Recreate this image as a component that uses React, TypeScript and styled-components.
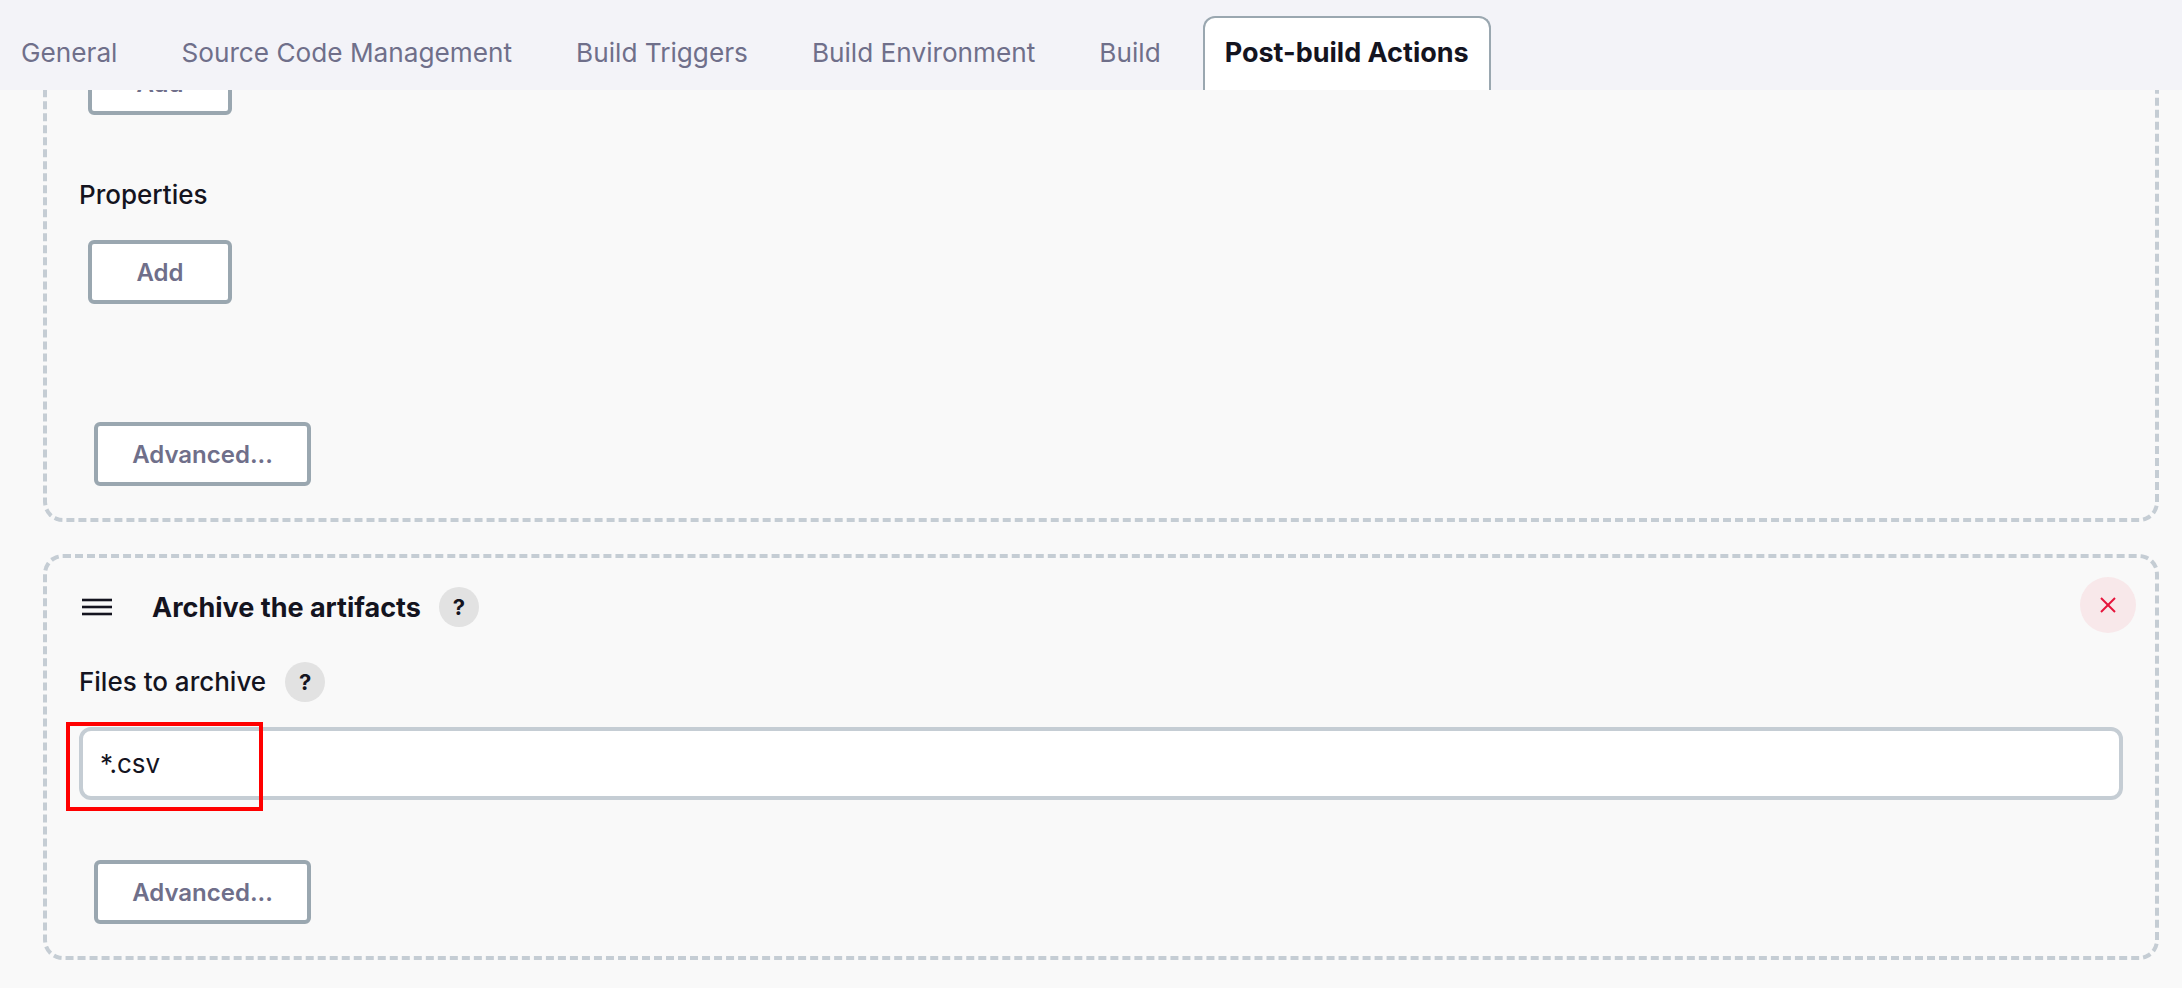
import { createGlobalStyle } from 'styled-components'
import styled from 'styled-components'

const GlobalStyle = createGlobalStyle`
  html, body {
    margin: 0;
    padding: 0;
    background: #f9f9f9;
    font-family: Inter, "Liberation Sans", sans-serif;
  }
`
const Page = styled.div`
  position: relative;
  display: flex;
  flex-direction: column;
  width: 2182px;
  height: 988px;
  overflow: hidden;
  background: #f9f9f9;
`
const TabBar = styled.div`
  display: flex;
  flex: 0 0 90px;
  align-items: flex-end;
  gap: 64px;
  padding-left: 21px;
  box-sizing: border-box;
  background: #f3f3f8;
  position: relative;
  z-index: 1;
`
const Tab = styled.div<{ $active?: boolean }>`
  box-sizing: border-box;
  height: ${p => (p.$active ? '74px' : '66px')};
  padding: ${p => (p.$active ? '19px 20px 0' : '13px 0 0')};
  margin-left: ${p => (p.$active ? '-22px' : '0')};
  font-size: ${p => (p.$active ? '27px' : '26.2px')};
  line-height: 32px;
  font-weight: ${p => (p.$active ? 700 : 400)};
  color: ${p => (p.$active ? '#14141f' : '#6f6f8a')};
  background: ${p => (p.$active ? '#fff' : 'transparent')};
  border: ${p => (p.$active ? '2px solid #9aa7b0' : 'none')};
  border-bottom: none;
  border-radius: ${p => (p.$active ? '12px 12px 0 0' : '0')};
  white-space: nowrap;
`
const Viewport = styled.div`
  flex: 1;
  overflow: hidden;
  padding: 0 23px 0 43px;
`
const Cards = styled.div`
  display: flex;
  flex-direction: column;
  gap: 32px;
  margin-top: -69px;
`
const Card = styled.div`
  position: relative;
  box-sizing: border-box;
  border: 4px dashed #c5cdd4;
  border-radius: 20px;
`
const TopCard = styled(Card)`
  height: 501px;
  padding: 26px 0 0 32px;
`
const BottomCard = styled(Card)`
  height: 406px;
  padding: 29px 0 0 32px;
`
const Button = styled.div<{ $wide?: boolean }>`
  display: flex;
  align-items: center;
  justify-content: center;
  box-sizing: border-box;
  width: ${p => (p.$wide ? '217px' : '144px')};
  height: 64px;
  margin-left: ${p => (p.$wide ? '15px' : '9px')};
  background: #fff;
  border: 4px solid #9aa7b0;
  border-radius: 6px;
  font-size: 24px;
  font-weight: 600;
  color: #6f6f8a;
`
const FieldLabel = styled.div`
  display: flex;
  align-items: center;
  gap: 19px;
  font-size: 26px;
  font-weight: 500;
  line-height: 40px;
  color: #14141f;
`
const PropertiesLabel = styled(FieldLabel)`
  margin: 60px 0 25px 0;
`
const TopAdvanced = styled.div`
  margin-top: 118px;
`
const Header = styled.div`
  display: flex;
  align-items: center;
  height: 40px;
`
const Grip = styled.svg`
  width: 30px;
  height: 18px;
  margin: 0 40px 0 3px;
  stroke: #14141f;
  stroke-width: 2.6;
`
const Title = styled.div`
  font-size: 27px;
  font-weight: 700;
  color: #14141f;
  margin-right: 18px;
`
const Help = styled.div`
  display: flex;
  align-items: center;
  justify-content: center;
  width: 40px;
  height: 40px;
  border-radius: 50%;
  background: #e2e2e2;
  font-size: 22px;
  font-weight: 700;
  color: #14141f;
`
const FilesLabel = styled(FieldLabel)`
  margin: 35px 0 25px 0;
`
const CloseButton = styled.div`
  position: absolute;
  top: 19px;
  right: 19px;
  display: flex;
  align-items: center;
  justify-content: center;
  width: 56px;
  height: 56px;
  border-radius: 50%;
  background: #f8e8ea;
`
const CloseIcon = styled.svg`
  width: 18px;
  height: 18px;
  stroke: #e6143c;
  stroke-width: 2;
`
const TextBox = styled.div`
  box-sizing: border-box;
  display: flex;
  align-items: center;
  width: 2044px;
  height: 73px;
  padding-left: 17px;
  background: #fff;
  border: 4px solid #c5cdd4;
  border-radius: 12px;
  font-size: 26px;
  color: #14141f;
`
const BottomAdvanced = styled.div`
  margin-top: 60px;
`
const Highlight = styled.div`
  position: absolute;
  left: 66px;
  top: 722px;
  width: 197px;
  height: 89px;
  box-sizing: border-box;
  border: 4px solid #ff0000;
`

const tabs = ['General', 'Source Code Management', 'Build Triggers', 'Build Environment', 'Build']

export default function App() {
  return (
    <Page>
      <GlobalStyle />
      <TabBar>
        {tabs.map(t => (
          <Tab key={t}>{t}</Tab>
        ))}
        <Tab $active>Post-build Actions</Tab>
      </TabBar>
      <Viewport>
        <Cards>
          <TopCard>
            <Button>Add</Button>
            <PropertiesLabel>Properties</PropertiesLabel>
            <Button>Add</Button>
            <TopAdvanced>
              <Button $wide>Advanced...</Button>
            </TopAdvanced>
          </TopCard>
          <BottomCard>
            <Header>
              <Grip viewBox="0 0 30 18">
                <line x1="0" y1="2" x2="30" y2="2" />
                <line x1="0" y1="9" x2="30" y2="9" />
                <line x1="0" y1="16" x2="30" y2="16" />
              </Grip>
              <Title>Archive the artifacts</Title>
              <Help>?</Help>
            </Header>
            <FilesLabel>
              Files to archive
              <Help>?</Help>
            </FilesLabel>
            <TextBox>*.csv</TextBox>
            <BottomAdvanced>
              <Button $wide>Advanced...</Button>
            </BottomAdvanced>
            <CloseButton>
              <CloseIcon viewBox="0 0 18 18">
                <line x1="2" y1="2" x2="16" y2="16" />
                <line x1="16" y1="2" x2="2" y2="16" />
              </CloseIcon>
            </CloseButton>
          </BottomCard>
        </Cards>
      </Viewport>
      <Highlight />
    </Page>
  )
}
